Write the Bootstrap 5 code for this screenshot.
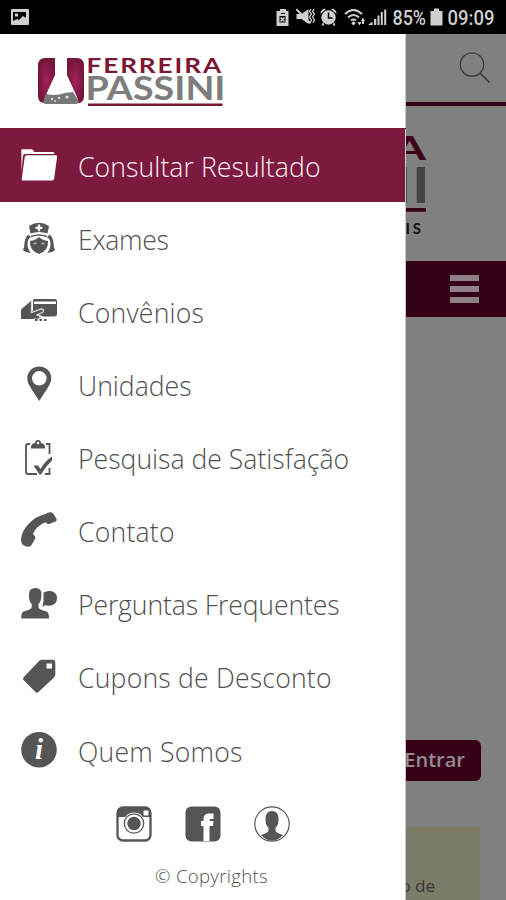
<!DOCTYPE html>
<html lang="pt-BR">
<head>
<meta charset="utf-8">
<meta name="viewport" content="width=device-width, initial-scale=1">
<title>Ferreira Passini</title>
<link href="https://cdn.jsdelivr.net/npm/bootstrap@5.3.0/dist/css/bootstrap.min.css" rel="stylesheet">
<style>
body{font-family:"Open Sans","Noto Sans",sans-serif;background:#808080;height:900px}
svg{display:block;flex:none}
.status-bar{height:34px;background:#000}
.stage{height:866px}
.drawer{top:0;left:0;width:406px;height:866px;background:#fff;box-shadow:inset -1px 0 #c9c9c9}
.brand-area{height:95px;border-bottom:1px solid #7c1833}
.menu-row{height:73.1px;padding:0 0 0 19px;font-size:26.6px;font-weight:300;color:#505050;white-space:nowrap;line-height:1;text-decoration:none}
.menu-row svg{margin-right:19px}
.menu-row span{padding-top:3px}
.fit-a{letter-spacing:.08px}
.fit-b{letter-spacing:-.3px}
.fit-c{letter-spacing:.2px}
.fit-d{letter-spacing:-.13px}
.menu-row.current{background:#7b193f;color:#ffeef2;width:405px;height:72.6px;margin-bottom:.5px}
.socials{padding:19px 0 0 116px;gap:33px}
.copy{font-size:18.6px;letter-spacing:.3px;font-weight:300;color:#505050;line-height:1;padding-left:155px;margin-top:25px}
.top-area{height:72px;border-bottom:4px solid #30001a;padding:15px 12px 0 0}
.page-logo{height:155px}
.nav-strip{height:56px;background:#330018;padding-right:27px}
.bars{width:29px;gap:5px}
.bars span{height:6px;background:#8e8188}
.login-area{padding:423px 25px 0 0}
.enter{width:110px;height:41px;border-radius:6px;background:#370019;color:#938b8f;font-weight:600;font-size:20px;line-height:1;padding:0 16px 2px 0}
.notice{margin:46px 26px 0 26px;height:74px;background:#7b7b68;color:#363636;font-size:17px;line-height:1;padding:50px 45px 0 0}
</style>
</head>
<body class="overflow-hidden">
<header class="status-bar">
<svg width="506" height="34" viewBox="0 0 506 34" fill="#cfcfcf">
<path fill-rule="evenodd" d="M12 9h16a1 1 0 0 1 1 1v14a1 1 0 0 1-1 1H12a1 1 0 0 1-1-1V10a1 1 0 0 1 1-1zM13 12v9l4-2 2 1 4-4 3 2v-6zm2 1.500h3v3h-3z"/>
<path fill-rule="evenodd" d="M280 9h6v2h2.500v15h-12V11h3.500zM279.500 16h6v6.500h-6zM281 13h4v1h-4z"/>
<path d="M280.500 17.500l4 4M284.500 17.500l-4 4" stroke="#cfcfcf" stroke-width="1.500"/>
<path d="M296.500 14h5l7-5v15l-7-5h-5zM297 8.500l14 14-1.300 1.500-14-14z"/>
<path d="M311 9l-1.500 2.500 2 2.500-2 3 2 3-1.500 3M314 9l-1.500 2.500 2 2.500-2 3 2 3-1.500 3" fill="none" stroke="#cfcfcf" stroke-width="1.300"/>
<circle cx="328.500" cy="17.500" r="7.200"/><path d="M320.500 14a4.500 4.500 0 0 1 5.500-5zM336.500 14a4.500 4.500 0 0 0-5.500-5zM323 22l-1.500 3.500h3zM334 22l1.500 3.500h-3z"/>
<path d="M328.500 12.500v5.500h4" fill="none" stroke="#000" stroke-width="1.500"/>
<path d="M345 14q8.500-8 17 0M348 17.500q5.500-5 11 0M351 20.500q2.500-2 5 0" fill="none" stroke="#cfcfcf" stroke-width="2"/><circle cx="353.500" cy="23.200" r="1.800"/>
<path d="M357.500 22h4l-2 3.500zM361 21h4l-2-3.500zM362 21h2v3h-2z"/>
<path d="M368 25l4.500-3.500V25zM374 19h2.300v6H374zM377.500 15.500h2v9.500h-2zM380.800 12h2v13h-2zM384.200 9.500h2V25h-2z"/>
<text x="392.500" y="24.800" font-family="Roboto" font-weight="500" font-size="20" textLength="33.500" lengthAdjust="spacingAndGlyphs">85%</text>
<path d="M434 8.500h5V11h3.500v14.500h-12V11h3.500z"/>
<text x="447.500" y="24.800" font-family="Roboto" font-weight="500" font-size="20" textLength="47" lengthAdjust="spacingAndGlyphs">09:09</text>
</svg>
</header>
<main class="stage position-relative">
<section>
<div class="top-area d-flex justify-content-end">
<svg width="36" height="38" viewBox="0 0 36 38" fill="none" stroke="#3a3a3a" stroke-width="1.300"><circle cx="14" cy="15.500" r="11.700"/><path d="M22 24l9.500 9.500" stroke-width="1.700"/></svg>
</div>
<div class="page-logo d-flex justify-content-end">
<svg width="300" height="155" viewBox="206 106 300 155" font-family="Lato">
<text x="206" y="160" font-size="33" font-weight="700" fill="#3d0017" textLength="220" lengthAdjust="spacingAndGlyphs">FERREIRA</text>
<text x="202" y="203.300" font-size="50" font-weight="700" fill="#444" textLength="228" lengthAdjust="spacingAndGlyphs">PASSINI</text>
<path d="M206 208h220v3.800H206z" fill="#37001a"/>
<text x="271" y="234" font-size="15" font-weight="700" fill="#111" textLength="150">LABORATORIAIS</text>
</svg>
</div>
<div class="nav-strip d-flex align-items-center justify-content-end"><div class="bars d-flex flex-column"><span></span><span></span><span></span></div></div>
<div class="login-area d-flex justify-content-end"><div class="enter d-flex align-items-center justify-content-end">Entrar</div></div>
<div class="notice text-end">Acesso ao resultado de</div>
</section>
<aside class="drawer position-absolute">
<div class="brand-area">
<svg width="260" height="94" viewBox="0 34 260 94">
<defs><radialGradient id="wine"><stop offset="0" stop-color="#a5205a"/><stop offset="1" stop-color="#73163a"/></radialGradient></defs>
<path d="M45 58h10v17L45 97l-1.500 6q-5.500-1-5.500-7V66q0-8 7-8z" fill="url(#wine)"/>
<path d="M67 58h10q7 0 7 8v30q0 6-5.500 7.500L77 97 67 75z" fill="url(#wine)"/>
<path d="M46 94q7 1.500 13 .5 7-2.500 14-2.500l5.500 9q.5 3-3 3H46q-3 0-2.500-3z" fill="#77777a"/>
<circle cx="52" cy="99" r="1.200" fill="#ddd"/><circle cx="59" cy="98" r="1.300" fill="#ddd"/><circle cx="67" cy="97" r="1.600" fill="#ddd"/><circle cx="55" cy="101" r=".9" fill="#ddd"/>
<text x="86.500" y="72.700" font-family="Lato" font-weight="700" font-size="20.500" fill="#7c1833" textLength="136.500" lengthAdjust="spacingAndGlyphs" letter-spacing="1.500">FERREIRA</text>
<text x="85.500" y="100.300" font-family="Lato" font-weight="700" font-size="31.500" fill="#7d7d7d" textLength="140" lengthAdjust="spacingAndGlyphs">PASSINI</text>
<path d="M88 103.400h134.500v2.700H88z" fill="#7c1833"/>
</svg>
</div>
<nav class="d-flex flex-column">
<a class="menu-row current d-flex align-items-center"><svg width="40" height="40" fill="#fff"><path d="M2.300 5q0-.8.800-.8h9.500q1.500 0 2 1.500l.5 1.300H34q1.500 0 1.500 2H6Q4 9 3.800 12L2.600 27z"/><path d="M7.500 10.200H37q1.300 0 1.100 1.500l-3 22q-.3 1.800-2 1.800H4q-1.500 0-1.300-1.500l3-22q.2-1.800 1.800-1.800z"/></svg><span class="fit-a">Consultar Resultado</span></a>
<a class="menu-row d-flex align-items-center"><svg width="40" height="40" fill="#555"><path fill-rule="evenodd" d="M10 7q10-6.500 20 0l-1.500 7.500q-8.500-3-17 0zM18.900 5.500v2.300h-2.300v2.200h2.300v2.300h2.200V10h2.300V7.800h-2.300V5.500z"/><path d="M9.500 15.500Q6 18 5.500 24q0 4-1.500 7 2.500 2.800 8 2.800Q8 30 8.500 24q.5-5 3.500-5.500zM30.500 15.500q3.500 2.500 4 8.500 0 4 1.500 7-2.500 2.800-8 2.800 4-3.800 3.500-9.800-.5-5-3.500-5.500z"/><path d="M11 22q5.500-.5 9-4 3.500 3.500 9 4 .8 9.500-9 13-9.800-3.500-9-13z"/><path d="M12 17.500q8-3 16 0" fill="none" stroke="#555" stroke-width="1.500"/><path d="M14.500 24.500h3M22.500 24.500h3" stroke="#bbb" stroke-width="1.500" fill="none"/></svg><span class="fit-b">Exames</span></a>
<a class="menu-row d-flex align-items-center"><svg width="40" height="40" fill="#555"><path fill-rule="evenodd" d="M15 7h21q2 0 2 2v13q0 2.500-3 2.500H24L14 20V9q0-2 1-2zM15 9.500V12h22V9.500z"/><path d="M2 17.500L12.500 8.500v10.500l10-2 2 3-5 3 2 4H2z"/><path d="M12.500 8.500v12l9.500-3.500q4 .5 1.500 3.500l-6 2.500q4 0 4 3-2 2-6.500 1" fill="none" stroke="#ddd" stroke-width="1.300"/><path d="M16 27h2.500v2H16zM20.500 27H23v2h-2.500zM25 27h2.500v2H25z"/></svg><span class="fit-c">Convênios</span></a>
<a class="menu-row d-flex align-items-center"><svg width="40" height="40" fill="#555"><path fill-rule="evenodd" d="M20.300 1.500c7 0 12 5.300 12 12 0 5-3.500 9-12 22.500C11.500 22.500 8.300 18.500 8.300 13.500c0-6.700 5-12 12-12zm0 4.500a7.300 7.300 0 1 0 0 14.600 7.300 7.300 0 0 0 0-14.600z"/></svg><span>Unidades</span></a>
<a class="menu-row d-flex align-items-center"><svg width="40" height="40" fill="none" stroke="#555"><path d="M11 6H9q-2 0-2 2v26q0 2 2 2h9M27 6h3.500V16M26 36h4.500v-6" stroke-width="1.800"/><path fill="#555" stroke="none" fill-rule="evenodd" d="M12 8q1-2.800 4-3 0-3 3-3t3 3q3 .2 4 3v2.500H12zm7-4.300a1.300 1.300 0 1 0 0 2.600 1.300 1.300 0 0 0 0-2.600z"/><path fill="#555" stroke="none" d="M14.500 27.500h4.500l2.500 3.500Q26 23 33 18.500v4Q27 28 22 36.500h-1.500z"/></svg><span>Pesquisa de Satisfação</span></a>
<a class="menu-row d-flex align-items-center"><svg width="40" height="40" fill="#555"><path d="M26.500 3Q30 .5 33 1.500q1.500 1 2.500 3l2 3.500q.8 1.700-1 2.500L31 12.800q-1.500.7-3-.2l-1.500-1.300Q17 15 14 23l1.800 2q1 1.200.3 2.700L12.500 34q-1 2-3 1.800Q6.500 36 4 34q-2-1.500-2-5 0-8 7.500-16Q17 5 26.500 3z"/></svg><span class="fit-c">Contato</span></a>
<a class="menu-row d-flex align-items-center"><svg width="40" height="40" fill="#555"><path d="M10 10q0-6 6.500-6 6 0 6 6l-.5 5q-.7 3.500-2.500 5v3q0 2 4 3.200l4.500 1.600q2 1 2 6.700H2.200q0-5.700 2-6.700l4.500-1.600q4-1.200 4-3.200v-3q-2-1.500-2.500-5z"/><path d="M24.500 8.500Q28 6.500 32 7q6 1.500 6 7 0 6-6 7.500-4 .5-6-.5l-2.500 2.500 1-6z"/></svg><span class="fit-d">Perguntas Frequentes</span></a>
<a class="menu-row d-flex align-items-center"><svg width="40" height="40" fill="#555"><path fill-rule="evenodd" d="M20.500 3.500Q21.500 2.800 23 2.800h11q2.300 0 2.300 2.300V17q0 2-1.300 3.500L19.500 35q-1.500 1.500-3 0L4.500 23q-1.200-1.500.3-3zM27.500 6.500v5H33v-5z"/></svg><span class="fit-c">Cupons de Desconto</span></a>
<a class="menu-row d-flex align-items-center"><svg width="40" height="40"><circle cx="20" cy="19.700" r="17.800" fill="#555"/><text x="20" y="29" text-anchor="middle" font-family="Liberation Serif" font-style="italic" font-weight="700" font-size="29" fill="#fff">i</text></svg><span class="fit-c">Quem Somos</span></a>
</nav>
<div class="socials d-flex">
<svg width="36" height="36"><rect x="1.500" y="1.500" width="33" height="33" rx="5.500" fill="#fff" stroke="#555" stroke-width="2.300"/><path d="M1.500 11V6q0-4.500 5-4.500h23q5 0 5 4.500v5z" fill="#555"/><circle cx="18" cy="17.500" r="11" fill="#fff"/><circle cx="18" cy="17.500" r="9.700" fill="none" stroke="#555" stroke-width="1.300"/><circle cx="18" cy="17.500" r="6.700" fill="#555"/><rect x="27.500" y="4.500" width="5" height="5" rx="1" fill="#fff"/></svg>
<svg width="36" height="36"><rect x=".5" y=".5" width="35" height="35" rx="6" fill="#555"/><path d="M18.500 35V20H16v-5h2.500v-2Q18.500 7.500 24 7.500h4.500V13H26q-1.500 0-1.500 1.500v.5h4l-.5 5h-3.500v15z" fill="#fff"/></svg>
<svg width="36" height="36" fill="#555"><circle cx="18" cy="18" r="17.200" fill="#fff" stroke="#555" stroke-width="1.200"/><path d="M11.500 13q0-8 6.500-8t6.500 8q.5 5-3 9v3q1 2 7.500 4-5 5.500-11 5.500T7 29q6.500-2 7.500-4v-3q-3.500-4-3-9z"/></svg>
</div>
<div class="copy">© Copyrights</div>
</aside>
</main>
<script src="https://cdn.jsdelivr.net/npm/bootstrap@5.3.0/dist/js/bootstrap.bundle.min.js"></script>
</body>
</html>
